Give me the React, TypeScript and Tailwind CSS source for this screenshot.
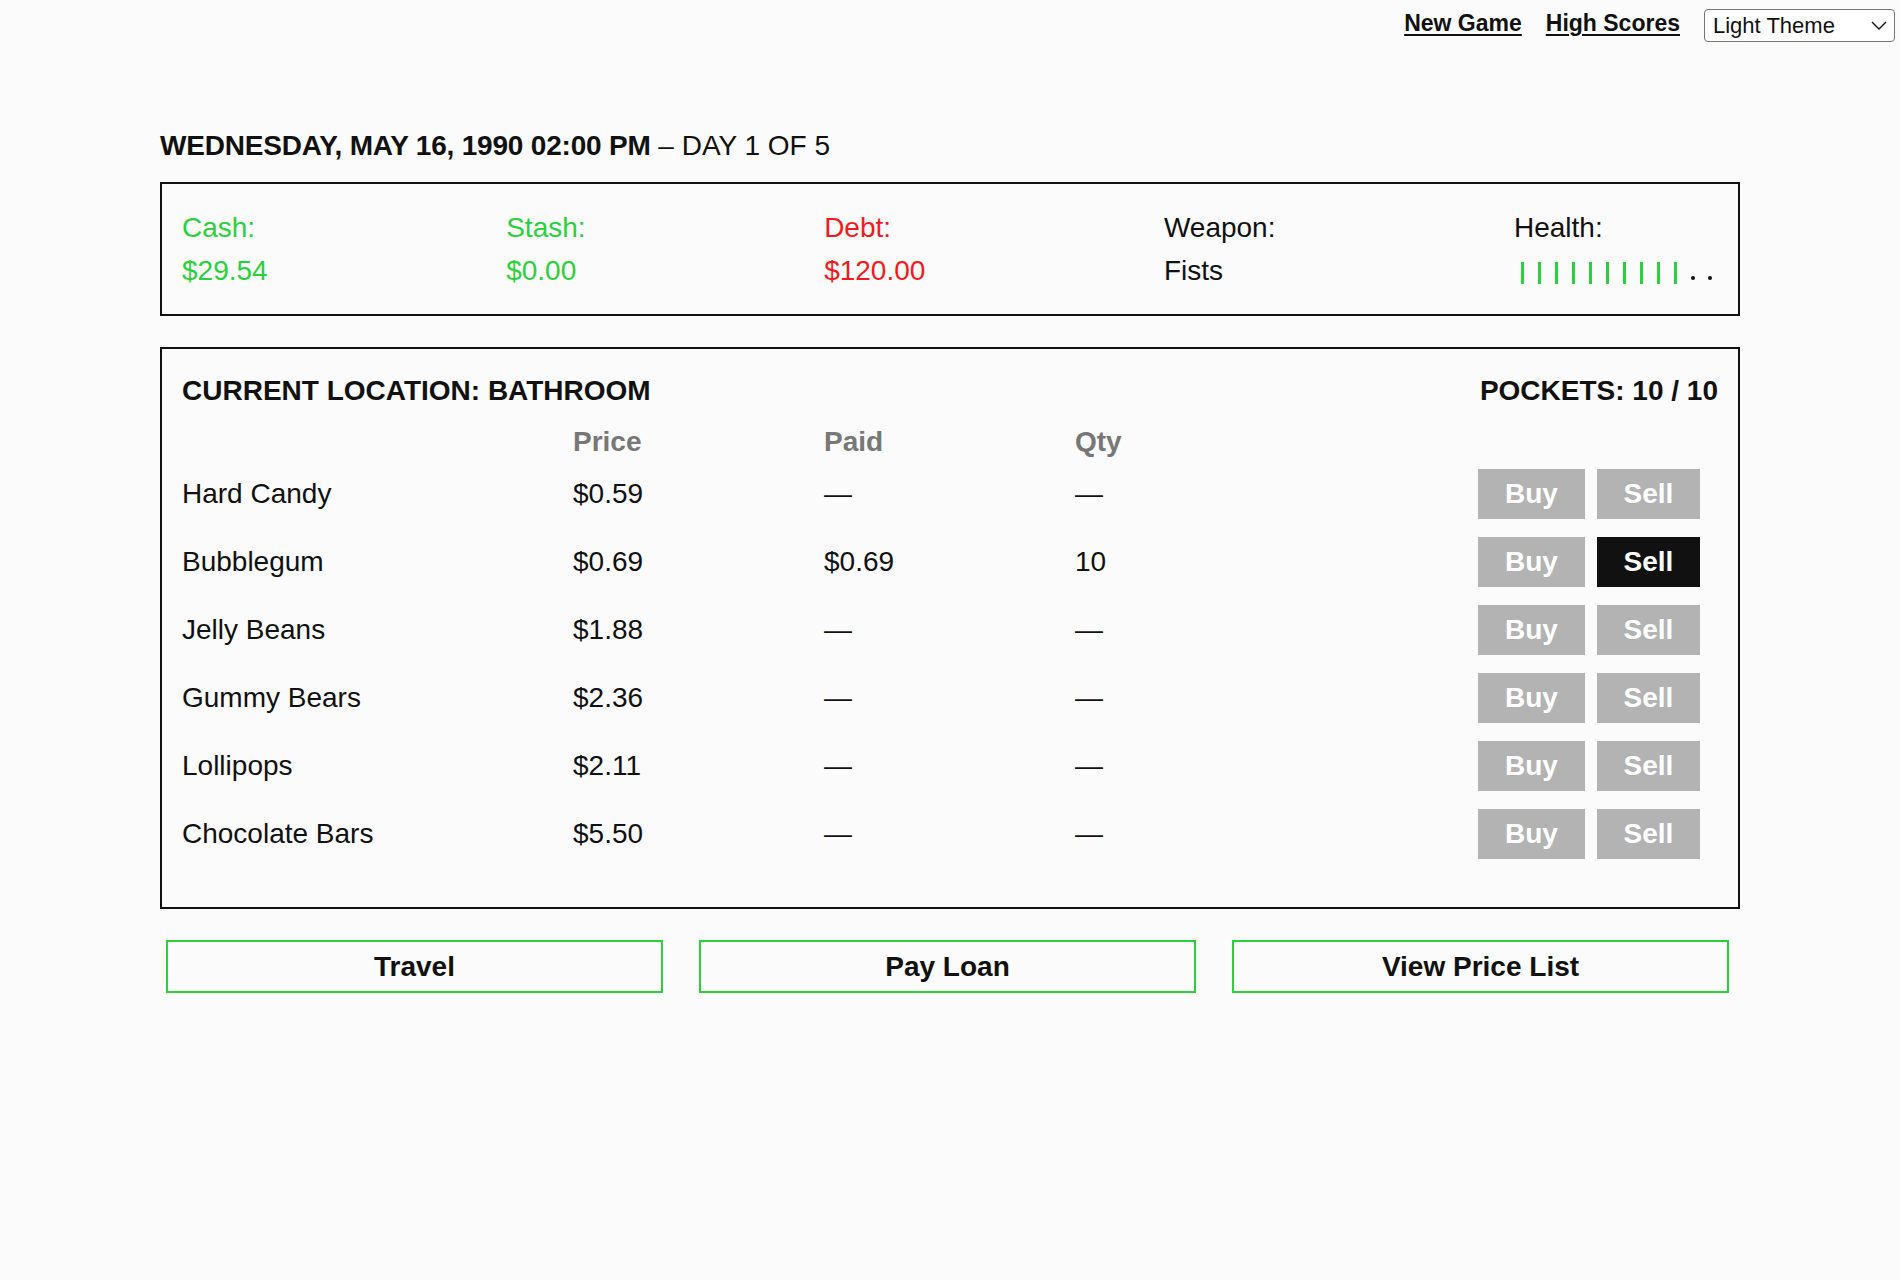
import { type FC } from "react"

type Candy = {
  name: string
  price: string
  paid: string | null
  qty: number | null
}

const candies: Candy[] = [
  { name: "Hard Candy", price: "$0.59", paid: null, qty: null },
  { name: "Bubblegum", price: "$0.69", paid: "$0.69", qty: 10 },
  { name: "Jelly Beans", price: "$1.88", paid: null, qty: null },
  { name: "Gummy Bears", price: "$2.36", paid: null, qty: null },
  { name: "Lollipops", price: "$2.11", paid: null, qty: null },
  { name: "Chocolate Bars", price: "$5.50", paid: null, qty: null },
]

const HEALTH = 10
const MAX_HEALTH = 12

// top right: links + theme picker
const TopNav: FC = () => (
  <nav className="flex items-start justify-end gap-[24px] pt-[9px] pr-[5px]">
    <a href="#" className="h-[28px] text-[23px] font-bold leading-[28px] underline decoration-2 underline-offset-[3px]">
      New Game
    </a>
    <a href="#" className="h-[28px] text-[23px] font-bold leading-[28px] underline decoration-2 underline-offset-[3px]">
      High Scores
    </a>
    <div className="flex h-[33px] w-[191px] items-center justify-between rounded-[4px] border border-[#767676] bg-white pl-[8px] pr-[7px] text-[22px]">
      <span>Light Theme</span>
      <svg width="16" height="9" viewBox="0 0 16 9" fill="none" stroke="#111" strokeWidth="1.4">
        <polyline points="1,1 8,8 15,1" />
      </svg>
    </div>
  </nav>
)

const Stat: FC<{ label: string; value: string; color: string }> = ({ label, value, color }) => (
  <div className={`flex flex-col leading-[43px] ${color}`}>
    <span>{label}</span>
    <span>{value}</span>
  </div>
)

const HealthBar: FC = () => (
  <div className="flex flex-col leading-[43px]">
    <span>Health:</span>
    <div className="flex h-[43px]">
      {Array.from({ length: MAX_HEALTH }).map((_, i) => (
        <div key={i} className="flex w-[17px] items-end justify-center">
          {i < HEALTH ? (
            <div className="mb-[8px] h-[22px] w-[2.5px] bg-[#2bd13c]" />
          ) : (
            <div className="mb-[12px] h-[4px] w-[4px] rounded-full bg-[#111]" />
          )}
        </div>
      ))}
    </div>
  </div>
)

const Dash = () => <span>—</span>

export default function App() {
  return (
    <div className="min-h-screen bg-[#fbfbfb] text-[#111] font-['Liberation_Sans',Arial,sans-serif]">
      <TopNav />

      <main className="mx-auto max-w-[1580px] pt-[83px] text-[28px]">
        <h2 className="leading-[42px]">
          <span className="font-bold tracking-[-0.2px]">WEDNESDAY, MAY 16, 1990 02:00 PM</span> – DAY 1 OF 5
        </h2>

        {/* Stats */}
        <section className="mt-[15px] flex justify-between border-2 border-[#111] px-[20px] py-[22px]">
          <Stat label="Cash:" value="$29.54" color="text-[#2bd13c]" />
          <Stat label="Stash:" value="$0.00" color="text-[#2bd13c]" />
          <Stat label="Debt:" value="$120.00" color="text-[#f5191b]" />
          <Stat label="Weapon:" value="Fists" color="text-[#111]" />
          <HealthBar />
        </section>

        {/* Market */}
        <section className="mt-[31px] border-2 border-[#111] px-[20px] pt-[21px] pb-[48px]">
          <div className="flex justify-between font-bold leading-[42px]">
            <span>CURRENT LOCATION: BATHROOM</span>
            <span>POCKETS: 10 / 10</span>
          </div>

          <div className="mt-[9px] grid grid-cols-[391px_251px_251px_1fr] font-bold leading-[42px] text-[#777]">
            <span />
            <span>Price</span>
            <span>Paid</span>
            <span>Qty</span>
          </div>

          <div className="mt-[6px] flex flex-col gap-[18px]">
            {candies.map((c) => (
              <div key={c.name} className="grid h-[50px] grid-cols-[391px_251px_251px_1fr_auto] items-center">
                <span>{c.name}</span>
                <span>{c.price}</span>
                <span>{c.paid ?? <Dash />}</span>
                <span>{c.qty ?? <Dash />}</span>
                <div className="flex gap-[12px] pr-[18px] font-bold text-white">
                  <button className="h-[50px] w-[107px] bg-[#b3b3b3]">Buy</button>
                  <button className={`h-[50px] w-[103px] ${c.qty ? "bg-[#111]" : "bg-[#b3b3b3]"}`}>
                    Sell
                  </button>
                </div>
              </div>
            ))}
          </div>
        </section>

        {/* Actions */}
        <div className="mt-[31px] flex gap-[36px] pl-[6px] pr-[11px] font-bold">
          {["Travel", "Pay Loan", "View Price List"].map((label) => (
            <button key={label} className="h-[53px] flex-1 border-2 border-[#2bd13c] leading-[49px]">
              {label}
            </button>
          ))}
        </div>
      </main>
    </div>
  )
}
